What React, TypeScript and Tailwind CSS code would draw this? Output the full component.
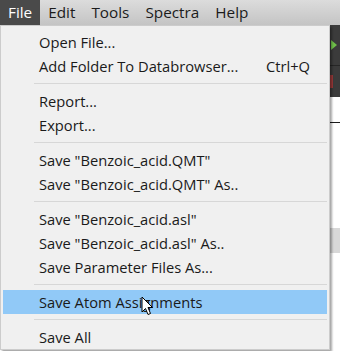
import React from "react";

type Entry = { label: string; shortcut?: string; active?: boolean } | "sep";

const entries: Entry[] = [
  { label: "Open File..." },
  { label: "Add Folder To Databrowser...", shortcut: "Ctrl+Q" },
  "sep",
  { label: "Report..." },
  { label: "Export..." },
  "sep",
  { label: 'Save "Benzoic_acid.QMT"' },
  { label: 'Save "Benzoic_acid.QMT" As..' },
  "sep",
  { label: 'Save "Benzoic_acid.asl"' },
  { label: 'Save "Benzoic_acid.asl" As..' },
  { label: "Save Parameter Files As..." },
  "sep",
  { label: "Save Atom Assignments", active: true },
  "sep",
  { label: "Save All" },
];

const menus = ["File", "Edit", "Tools", "Spectra", "Help"];

function Cursor() {
  return (
    <svg
      className="absolute left-[141px] top-[296px]"
      width="13"
      height="21"
      viewBox="0 0 13 21"
    >
      <path
        d="M1 1 L1 16 L4.5 12.5 L7 18.5 L9.5 17.5 L7 11.5 L11.5 11.5 Z"
        fill="#ffffff"
        stroke="#000000"
        strokeWidth="1"
        strokeLinejoin="miter"
      />
    </svg>
  );
}

export default function App() {
  return (
    <div
      className="relative w-[340px] h-[351px] overflow-hidden bg-white"
      style={{ fontFamily: '"Open Sans", "Noto Sans", sans-serif' }}
    >
      <div className="flex h-[25px] bg-gradient-to-b from-[#dcdcdc] to-[#c4c4c4] text-[15.3px] text-[#1b1b1b]">
        {menus.map((m, i) => (
          <div
            key={m}
            className={
              i === 0
                ? "flex items-center pl-[8px] pr-[8px] bg-[#4a4a4a] text-white"
                : "flex items-center px-[8px]"
            }
          >
            {m}
          </div>
        ))}
      </div>

      {/* window content behind the menu */}
      <div className="flex flex-col">
        <div className="flex flex-col bg-[#3b3b3b] h-[72px]">
          <div className="flex h-[41px] items-center justify-end pr-[3px] border-b border-[#262626]">
            <svg width="6" height="10" viewBox="0 0 6 10">
              <path d="M0 0 L6 5 L0 10 Z" fill="#6fbf4a" />
            </svg>
          </div>
          <div className="flex flex-1 items-center justify-end pr-[7px]">
            <div className="w-[3px] h-[13px] bg-[#9b3a3a]" />
          </div>
        </div>
        <div className="h-[25px]" />
        <div className="h-px bg-[#1a1a1a]" />
        <div className="h-[105px]" />
        <div className="h-[25px] bg-[#d8d8d8]" />
      </div>

      {/* open dropdown */}
      <div className="absolute left-0 top-[25px] w-[330px] h-[325px] bg-[#f0f0f0] border border-[#cccccc] shadow-[2px_2px_2px_rgba(0,0,0,0.35)] pt-[4px] text-[14.7px] text-[#1a1a1a]">
        {entries.map((e, i) =>
          e === "sep" ? (
            <div key={i} className="h-[11px] flex items-center pl-[33px] pr-[2px]">
              <div className="h-px w-full bg-[#d7d7d7]" />
            </div>
          ) : (
            <div
              key={i}
              className={
                e.active
                  ? "flex items-center h-[24px] mx-[2px] pl-[36px] pr-[17px] bg-[#91c9f7]"
                  : "flex items-center h-[24px] mx-[2px] pl-[36px] pr-[17px]"
              }
            >
              <span className="flex-1">{e.label}</span>
              {e.shortcut && <span>{e.shortcut}</span>}
            </div>
          )
        )}
      </div>

      <Cursor />
    </div>
  );
}
